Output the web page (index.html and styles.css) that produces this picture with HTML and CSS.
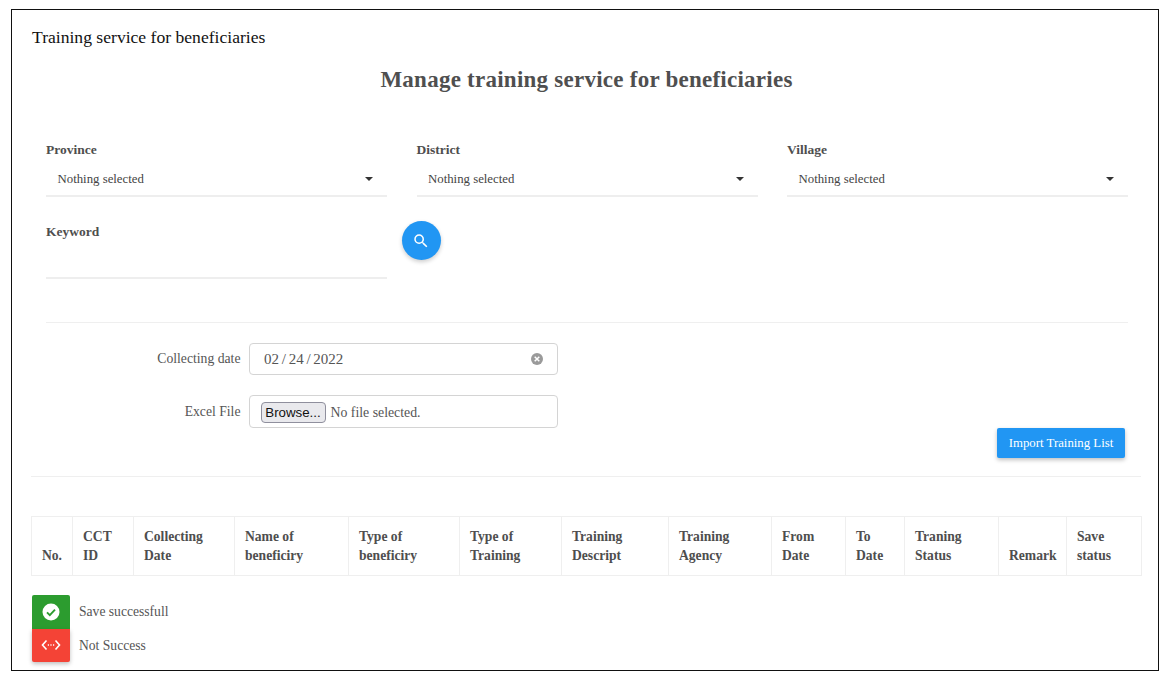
FILE: index.html
```html
<!DOCTYPE html>
<html lang="en">
<head>
<meta charset="utf-8">
<title>Training service for beneficiaries</title>
<link rel="stylesheet" href="styles.css">
</head>
<body>
<div class="frame">
  <div class="page-title">Training service for beneficiaries</div>
  <h1 class="heading">Manage training service for beneficiaries</h1>
  <section class="filters">
    <div class="filter-grid">
      <div class="field">
        <div class="field-label">Province</div>
        <div class="select"><span>Nothing selected</span><i class="caret"></i></div>
      </div>
      <div class="field">
        <div class="field-label">District</div>
        <div class="select"><span>Nothing selected</span><i class="caret"></i></div>
      </div>
      <div class="field">
        <div class="field-label">Village</div>
        <div class="select"><span>Nothing selected</span><i class="caret"></i></div>
      </div>
      <div class="field">
        <div class="field-label">Keyword</div>
        <div class="keyword-input"></div>
      </div>
      <div class="search-cell">
        <button class="search-btn" type="button" aria-label="Search">
          <svg width="18" height="18" viewBox="0 0 24 24"><path fill="#fff" d="M15.5 14h-.79l-.28-.27A6.47 6.47 0 0 0 16 9.5 6.5 6.5 0 1 0 9.5 16c1.61 0 3.09-.59 4.23-1.57l.27.28v.79l5 4.99L20.49 19l-4.99-5zm-6 0C7.01 14 5 11.99 5 9.5S7.01 5 9.5 5 14 7.01 14 9.5 11.99 14 9.5 14z"/></svg>
        </button>
      </div>
    </div>
  </section>
  <hr class="rule-inner">
  <section class="import">
    <div class="import-row">
      <label class="import-label">Collecting date</label>
      <div class="input-box date-box">
        <span class="date-value">02 / 24 / 2022</span>
        <svg class="clear-icon" width="14" height="14" viewBox="0 0 14 14"><circle cx="7" cy="7" r="6" fill="#9a9a9a"/><path d="M4.7 4.7l4.6 4.6M9.3 4.7l-4.6 4.6" stroke="#fff" stroke-width="1.5"/></svg>
      </div>
    </div>
    <div class="import-row file-row">
      <label class="import-label">Excel File</label>
      <div class="input-box file-box">
        <span class="browse">Browse...</span>
        <span class="no-file">No file selected.</span>
      </div>
    </div>
    <div class="import-actions">
      <button class="import-btn" type="button">Import Training List</button>
    </div>
  </section>
  <hr class="rule-outer">
  <table class="data-table">
    <colgroup>
      <col class="c1"><col class="c2"><col class="c3"><col class="c4"><col class="c5"><col class="c6"><col class="c7"><col class="c8"><col class="c9"><col class="c10"><col class="c11"><col class="c12"><col class="c13">
    </colgroup>
    <thead>
      <tr>
        <th>No.</th><th>CCT<br>ID</th><th>Collecting<br>Date</th><th>Name of<br>beneficiry</th><th>Type of<br>beneficiry</th><th>Type of<br>Training</th><th>Training<br>Descript</th><th>Training<br>Agency</th><th>From<br>Date</th><th>To<br>Date</th><th>Traning<br>Status</th><th>Remark</th><th>Save<br>status</th>
      </tr>
    </thead>
  </table>
  <div class="legend">
    <div class="legend-row">
      <span class="legend-icon ok">
        <svg width="18" height="18" viewBox="0 0 18 18"><circle cx="9" cy="9" r="8.5" fill="#fff"/><path d="M5 9.3l2.8 2.8L13 6.6" fill="none" stroke="#2c9c2f" stroke-width="1.9"/></svg>
      </span>
      <span class="legend-text">Save successfull</span>
    </div>
    <div class="legend-row">
      <span class="legend-icon bad">
        <svg width="20" height="14" viewBox="0 0 20 14"><path d="M5.5 2.5L1.5 7l4 4.5M14.5 2.5l4 4.5-4 4.5" fill="none" stroke="#fff" stroke-width="1.6"/><path d="M6.8 7h1.2M9.4 7h1.2M12 7h1.2" stroke="#fff" stroke-width="1.6"/></svg>
      </span>
      <span class="legend-text">Not Success</span>
    </div>
  </div>
</div>
</body>
</html>
```
FILE: styles.css
```css
* { box-sizing: border-box; }
html, body { height: 100%; }
body {
  margin: 0;
  padding: 9px 8px 8px 11px;
  background: #fff;
  font-family: "Liberation Serif", "Times New Roman", serif;
  color: #555;
}
.frame {
  width: 1148px;
  height: 662px;
  border: 1px solid #111;
  padding: 0 17px 0 20px;
  overflow: hidden;
}
.page-title {
  margin-top: 17px;
  font-size: 17.6px;
  line-height: 21px;
  color: #111;
}
.heading {
  margin: 18px 0 0;
  text-align: center;
  font-size: 23px;
  line-height: 28px;
  font-weight: 700;
  letter-spacing: 0.25px;
  color: #4f4f4f;
}
.filters { padding: 0 13px 0 14px; margin-top: 43px; }
.filter-grid {
  display: grid;
  grid-template-columns: repeat(3, 1fr);
  column-gap: 29.5px;
}
.field { height: 82px; }
.field-label {
  font-size: 13.5px;
  line-height: 16px;
  font-weight: 700;
  padding-top: 5px;
  height: 21px;
  color: #4e4e4e;
}
.select {
  margin-top: 6px;
  height: 33px;
  display: flex;
  align-items: center;
  justify-content: space-between;
  padding: 0 14px 1px 11.5px;
  border-bottom: 2px solid #eeeeee;
  font-size: 12.8px;
  color: #444;
}
.caret {
  width: 0;
  height: 0;
  border-left: 4px solid transparent;
  border-right: 4px solid transparent;
  border-top: 4px solid #333;
}
.keyword-input {
  margin-top: 6px;
  height: 33px;
  border-bottom: 2px solid #eeeeee;
}
.search-cell { position: relative; }
.search-btn {
  margin: 2px 0 0 -15px;
  width: 39px;
  height: 39px;
  border: 0;
  border-radius: 50%;
  background: #2196f3;
  padding: 0;
  display: flex;
  align-items: center;
  justify-content: center;
  box-shadow: 0 2px 4px rgba(0,0,0,.2);
}
.rule-inner {
  margin: 21px 13px 0 13.5px;
  border: 0;
  border-top: 1px solid #efefef;
}
.import { position: relative; margin-top: 20px; height: 133px; }
.import-row { display: flex; align-items: center; }
.file-row { margin-top: 20px; }
.import-label {
  width: 208.5px;
  text-align: right;
  font-size: 13.7px;
  color: #555;
}
.input-box {
  margin-left: 8px;
  width: 309px;
  border: 1px solid #d4d4d4;
  border-radius: 4px;
  display: flex;
  align-items: center;
}
.date-box {
  height: 32px;
  padding: 0 13px 0 14.5px;
  justify-content: space-between;
}
.date-value { font-size: 15px; word-spacing: -1px; color: #555; }
.file-box { height: 33px; padding-left: 11px; }
.browse {
  width: 65px;
  height: 21px;
  margin-top: 2px;
  border: 1px solid #8f8f9d;
  border-radius: 4px;
  background: #e9e9ed;
  color: #111;
  font-family: "Liberation Sans", Arial, sans-serif;
  font-size: 13.3px;
  line-height: 19px;
  text-align: center;
}
.no-file { margin: 3px 0 0 5px; font-size: 13.8px; color: #555; }
.import-actions {
  position: absolute;
  top: 85px;
  right: 16px;
}
.import-btn {
  width: 128px;
  height: 30px;
  border: 0;
  border-radius: 2px;
  background: #2196f3;
  color: #fff;
  font-family: inherit;
  font-size: 12.8px;
  padding: 0;
  box-shadow: 0 2px 4px rgba(0,0,0,.25);
}
.rule-outer {
  margin: 0 0 0 -1px;
  border: 0;
  border-top: 1px solid #efefef;
}
.data-table {
  margin: 39px 0 0 -1px;
  width: 1110px;
  table-layout: fixed;
  border-collapse: collapse;
}
.data-table th {
  height: 59px;
  border: 1px solid #efefef;
  padding: 10px 0 10px 10px;
  vertical-align: bottom;
  text-align: left;
  font-size: 13.6px;
  line-height: 19px;
  color: #4e4e4e;
}
.c1 { width: 41px; }
.c2 { width: 61px; }
.c3 { width: 101px; }
.c4 { width: 114px; }
.c5 { width: 111px; }
.c6 { width: 102px; }
.c7 { width: 107px; }
.c8 { width: 103px; }
.c9 { width: 74px; }
.c10 { width: 59px; }
.c11 { width: 94px; }
.c12 { width: 68px; }
.c13 { width: 75px; }
.legend { margin-top: 19px; display: flex; flex-direction: column; }
.legend-row { display: flex; align-items: center; height: 33.5px; }
.legend-icon {
  width: 38px;
  height: 100%;
  display: flex;
  align-items: center;
  justify-content: center;
}
.ok { background: #2c9c2f; border-radius: 2px 2px 0 0; }
.bad { background: #f44336; border-radius: 0 0 2px 2px; box-shadow: 0 2px 4px rgba(0,0,0,.25); }
.legend-text { margin: 1px 0 0 9px; font-size: 13.6px; color: #555; }
```
